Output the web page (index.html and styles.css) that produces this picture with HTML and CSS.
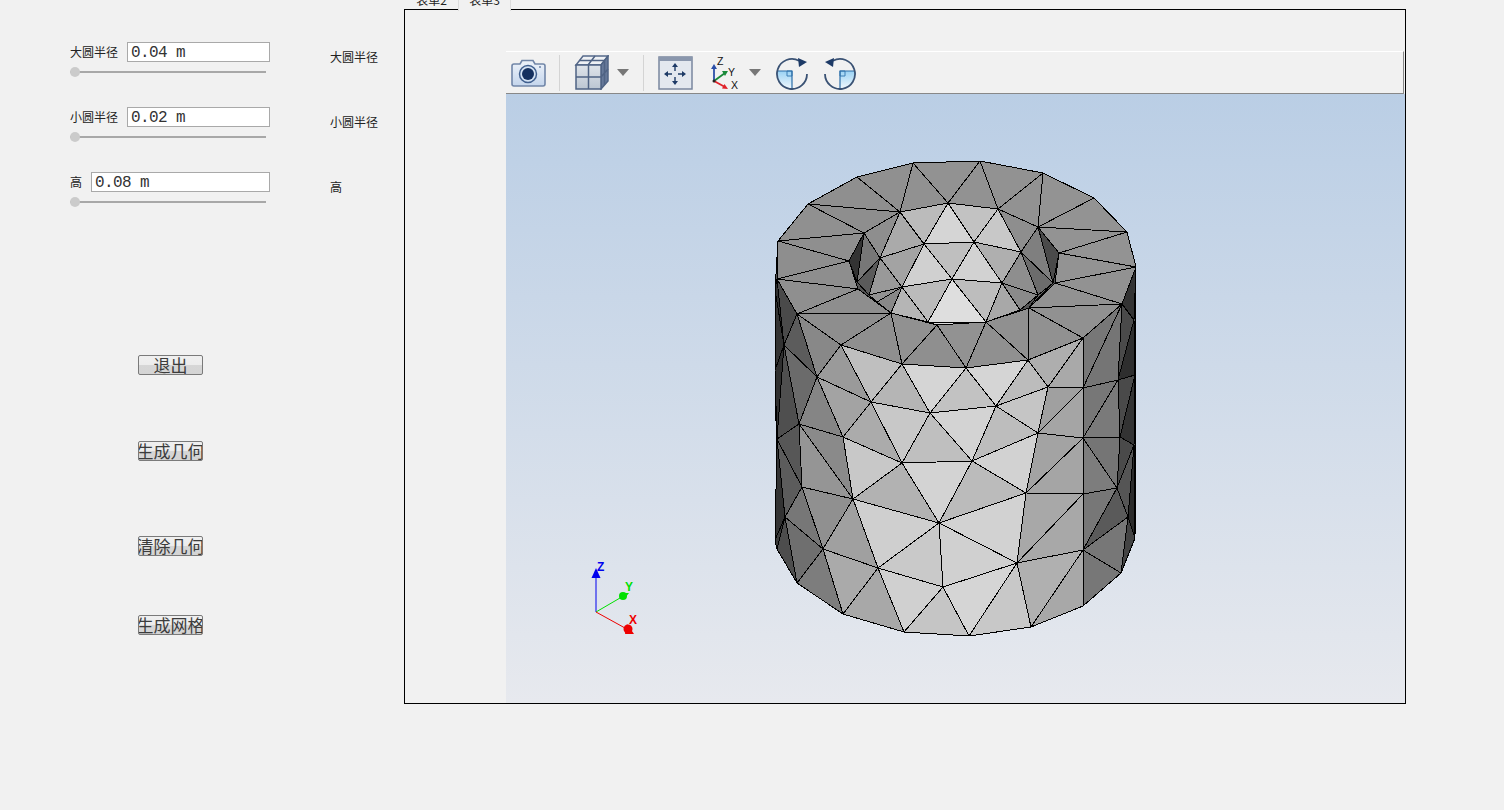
FILE: index.html
```html
<!DOCTYPE html>
<html lang="zh">
<head>
<meta charset="utf-8">
<title>几何网格</title>
<link rel="stylesheet" href="styles.css">
</head>
<body>
<div class="app">
  <section class="controls">
    <div class="field">
      <div class="field-row"><span class="label">大圆半径</span><div class="entry">0.04 m</div></div>
      <div class="slider"><div class="track"></div><div class="knob"></div></div>
    </div>
    <div class="field">
      <div class="field-row"><span class="label">小圆半径</span><div class="entry">0.02 m</div></div>
      <div class="slider"><div class="track"></div><div class="knob"></div></div>
    </div>
    <div class="field">
      <div class="field-row"><span class="label">高</span><div class="entry">0.08 m</div></div>
      <div class="slider"><div class="track"></div><div class="knob"></div></div>
    </div>
    <div class="actions">
      <button class="btn btn-exit">退出</button>
      <button class="btn btn-geo">生成几何</button>
      <button class="btn btn-clear">清除几何</button>
      <button class="btn btn-mesh">生成网格</button>
    </div>
  </section>
  <section class="readouts">
    <div class="readout">大圆半径</div>
    <div class="readout">小圆半径</div>
    <div class="readout">高</div>
  </section>
  <section class="frame">
    <div class="tabs">
      <div class="tab">表单2</div>
      <div class="tab tab-active">表单3</div>
    </div>
    <div class="viewer">
      <div class="toolbar">
        <svg class="ic ic-camera" viewBox="0 0 36 30">
          <defs><linearGradient id="cam" x1="0" y1="0" x2="0" y2="1"><stop offset="0" stop-color="#eef3fa"/><stop offset="1" stop-color="#c4d5ec"/></linearGradient></defs>
          <path d="M3 6h6l2-3.500h11l2 3.500h8a2 2 0 0 1 2 2v18a2 2 0 0 1-2 2h-29a2 2 0 0 1-2-2v-18a2 2 0 0 1 2-2z" fill="url(#cam)" stroke="#7186a8" stroke-width="1.600"/>
          <circle cx="17" cy="16" r="8.500" fill="#d4e2f3" stroke="#41608f" stroke-width="1.500"/>
          <circle cx="17" cy="16" r="6" fill="#15305f"/>
          <circle cx="29" cy="9" r="1" fill="#6d84a8"/>
        </svg>
        <div class="sep sep-a"></div>
        <svg class="ic ic-cube" viewBox="0 0 35 35">
          <defs><linearGradient id="cubef" x1="0" y1="0" x2="0" y2="1"><stop offset="0" stop-color="#dfe4ea"/><stop offset="1" stop-color="#bcc6d2"/></linearGradient></defs>
          <path d="M9 1h25l-7 9h-25z" fill="#eef1f5" stroke="#56698a" stroke-width="1.500"/>
          <path d="M27 10l7-9v25l-7 8z" fill="#66799a" stroke="#4f6384" stroke-width="1.500"/>
          <path d="M2 10h25v24h-25z" fill="url(#cubef)" stroke="#4f6384" stroke-width="1.500"/>
          <path d="M14.500 10v24M2 22h25M21 1l-7 9M5.500 5.500h25M30.500 5.500v24.500M27 22l7-8" fill="none" stroke="#4f6384" stroke-width="1.500"/>
        </svg>
        <div class="caret caret-a"></div>
        <div class="sep sep-b"></div>
        <svg class="ic ic-fit" viewBox="0 0 35 34">
          <rect x="1" y="1" width="33" height="32" fill="#e3e8ef" stroke="#7a879f" stroke-width="1.500"/>
          <rect x="1" y="1" width="33" height="4" fill="#8a97ad"/>
          <path d="M17 11v4M17 21v4M10 18h4M20 18h4" stroke="#1d3a66" stroke-width="1.400" fill="none"/>
          <path d="M17 7l-3 4h6zM17 29l-3-4h6zM6 18l4-3v6zM28 18l-4-3v6z" fill="#1d3a66"/>
        </svg>
        <svg class="ic ic-axes" viewBox="0 0 30 34">
          <path d="M4 25v-14" stroke="#2c4fa8" stroke-width="1.800" fill="none"/>
          <path d="M4 8l-3 5h6z" fill="#2c4fa8"/>
          <path d="M4 25l11-8" stroke="#1a8a3a" stroke-width="1.800" fill="none"/>
          <path d="M18 15l-6 0 3 5z" fill="#1a8a3a"/>
          <path d="M4 25l11 6" stroke="#e0222a" stroke-width="1.800" fill="none"/>
          <path d="M18 33l-6-0.500 2.500-4.500z" fill="#e0222a"/>
          <circle cx="4" cy="25" r="1.500" fill="#222"/>
          <text x="7" y="9" class="ax-label">Z</text>
          <text x="18" y="20" class="ax-label">Y</text>
          <text x="21" y="33" class="ax-label">X</text>
        </svg>
        <div class="caret caret-b"></div>
        <svg class="ic ic-rot" viewBox="0 0 34 34">
          <defs><linearGradient id="rotf" x1="0" y1="0" x2="0" y2="1"><stop offset="0" stop-color="#9ad2f4"/><stop offset="1" stop-color="#f2f8fd"/></linearGradient></defs>
          <path d="M2.300 15H17V33A15 15 0 0 1 2.300 15z" fill="url(#rotf)"/>
          <path d="M12 15h5v5h-5z" fill="none" stroke="#3c7fb5" stroke-width="1"/>
          <path d="M2.300 15H17V33" fill="none" stroke="#2c6ea8" stroke-width="1.200"/>
          <path d="M32 18A15 15 0 1 1 24 4.700" fill="none" stroke="#3a5274" stroke-width="1.800"/>
          <path d="M23 2l9 4-8 5z" fill="#1d3a66"/>
        </svg>
        <svg class="ic ic-rot ic-flip" viewBox="0 0 34 34">
          <path d="M2.300 15H17V33A15 15 0 0 1 2.300 15z" fill="url(#rotf)"/>
          <path d="M12 15h5v5h-5z" fill="none" stroke="#3c7fb5" stroke-width="1"/>
          <path d="M2.300 15H17V33" fill="none" stroke="#2c6ea8" stroke-width="1.200"/>
          <path d="M32 18A15 15 0 1 1 24 4.700" fill="none" stroke="#3a5274" stroke-width="1.800"/>
          <path d="M23 2l9 4-8 5z" fill="#1d3a66"/>
        </svg>
      </div>
      <div class="viewport">
        <svg class="scene" viewBox="506 94 899 609">
          <g class="mesh">
            <polygon fill="#555" points="778,241 808,204 857,177 913,163 980,161 1043,173 1094,198 1127,232 1136,267 1135,538 1121,573 1083,606 1031,627 969,636 904,632 843,614 797,583 777,549 775,290"/>
            <polygon fill="#333333" points="849,261 864,233 857,282"/>
            <polygon fill="#777777" points="864,233 880,258 857,282"/>
            <polygon fill="#5a5a5a" points="857,282 880,258 869,295"/>
            <polygon fill="#999999" points="880,258 902,287 869,295"/>
            <polygon fill="#929292" points="869,295 902,287 877,302"/>
            <polygon fill="#888888" points="902,287 891,313 877,302"/>
            <polygon fill="#8e8e8e" points="864,233 900,212 880,258"/>
            <polygon fill="#aaaaaa" points="900,212 924,244 880,258"/>
            <polygon fill="#bbbbbb" points="900,212 948,203 924,244"/>
            <polygon fill="#d5d5d5" points="948,203 974,242 924,244"/>
            <polygon fill="#c2c2c2" points="948,203 998,209 974,242"/>
            <polygon fill="#c8c8c8" points="998,209 1021,252 974,242"/>
            <polygon fill="#8e8e8e" points="998,209 1038,227 1021,252"/>
            <polygon fill="#4a4a4a" points="1038,227 1059,253 1053,283"/>
            <polygon fill="#7f7f7f" points="1038,227 1053,283 1021,252"/>
            <polygon fill="#6c6c6c" points="1021,252 1053,283 1038,295"/>
            <polygon fill="#666666" points="1038,295 1053,283 1029,308"/>
            <polygon fill="#a3a3a3" points="880,258 924,244 902,287"/>
            <polygon fill="#d0d0d0" points="924,244 952,279 902,287"/>
            <polygon fill="#bfbfbf" points="924,244 974,242 952,279"/>
            <polygon fill="#d2d2d2" points="974,242 1002,283 952,279"/>
            <polygon fill="#afafaf" points="974,242 1021,252 1002,283"/>
            <polygon fill="#8e8e8e" points="1021,252 1038,295 1002,283"/>
            <polygon fill="#bbbbbb" points="902,287 952,279 928,322"/>
            <polygon fill="#dedede" points="952,279 986,322 928,322"/>
            <polygon fill="#bdbdbd" points="952,279 1002,283 986,322"/>
            <polygon fill="#a8a8a8" points="1002,283 1020,310 986,322"/>
            <polygon fill="#8a8a8a" points="1002,283 1038,295 1020,310"/>
            <polygon fill="#b5b5b5" points="902,287 928,322 891,313"/>
            <polygon fill="#dddddd" points="928,322 986,322 937,325"/>

            <polygon fill="#909090" points="778,241 808,204 864,233"/>
            <polygon fill="#8e8e8e" points="808,204 900,212 864,233"/>
            <polygon fill="#8f8f8f" points="808,204 857,177 900,212"/>
            <polygon fill="#909090" points="857,177 913,163 900,212"/>
            <polygon fill="#919191" points="913,163 948,203 900,212"/>
            <polygon fill="#929292" points="913,163 980,161 948,203"/>
            <polygon fill="#929292" points="980,161 998,209 948,203"/>
            <polygon fill="#929292" points="980,161 1043,173 998,209"/>
            <polygon fill="#929292" points="1043,173 1038,227 998,209"/>
            <polygon fill="#939393" points="1043,173 1094,198 1038,227"/>
            <polygon fill="#939393" points="1094,198 1127,232 1038,227"/>
            <polygon fill="#939393" points="1127,232 1059,253 1038,227"/>
            <polygon fill="#939393" points="1127,232 1136,267 1059,253"/>
            <polygon fill="#939393" points="1136,267 1055,283 1059,253"/>
            <polygon fill="#929292" points="1136,267 1122,304 1055,283"/>
            <polygon fill="#929292" points="1122,304 1029,308 1055,283"/>
            <polygon fill="#919191" points="1122,304 1083,338 1029,308"/>
            <polygon fill="#919191" points="1083,338 1028,360 1029,308"/>
            <polygon fill="#909090" points="1028,360 986,322 1029,308"/>
            <polygon fill="#909090" points="1028,360 966,368 986,322"/>
            <polygon fill="#929292" points="966,368 937,325 986,322"/>
            <polygon fill="#8f8f8f" points="966,368 902,364 937,325"/>
            <polygon fill="#919191" points="902,364 891,313 937,325"/>
            <polygon fill="#8f8f8f" points="902,364 841,345 891,313"/>
            <polygon fill="#8e8e8e" points="841,345 797,314 891,313"/>
            <polygon fill="#8e8e8e" points="797,314 858,289 891,313"/>
            <polygon fill="#8f8f8f" points="797,314 777,279 858,289"/>
            <polygon fill="#8e8e8e" points="777,279 849,261 858,289"/>
            <polygon fill="#8e8e8e" points="777,279 778,241 849,261"/>
            <polygon fill="#8f8f8f" points="778,241 864,233 849,261"/>

            <polygon fill="#4a4a4a" points="777,279 797,314 784,345"/>
            <polygon fill="#2e2e2e" points="777,279 784,345 775,290"/>
            <polygon fill="#333333" points="775,290 784,345 775,370"/>
            <polygon fill="#4f4f4f" points="784,345 799,424 777,439"/>
            <polygon fill="#2f2f2f" points="775,370 784,345 777,439"/>
            <polygon fill="#575757" points="777,439 799,424 802,487"/>
            <polygon fill="#5c5c5c" points="777,439 802,487 785,517"/>
            <polygon fill="#333333" points="777,439 785,517 775,540"/>
            <polygon fill="#3a3a3a" points="775,540 785,517 777,549"/>
            <polygon fill="#4d4d4d" points="777,549 785,517 797,583"/>
            <polygon fill="#6f6f6f" points="785,517 823,549 797,583"/>
            <polygon fill="#777777" points="785,517 802,487 823,549"/>
            <polygon fill="#5c5c5c" points="797,314 817,377 784,345"/>
            <polygon fill="#6b6b6b" points="784,345 817,377 799,424"/>
            <polygon fill="#888888" points="797,314 841,345 817,377"/>
            <polygon fill="#9a9a9a" points="817,377 841,345 871,402"/>
            <polygon fill="#a3a3a3" points="817,377 871,402 843,437"/>
            <polygon fill="#858585" points="817,377 843,437 799,424"/>
            <polygon fill="#8a8a8a" points="799,424 843,437 853,499"/>
            <polygon fill="#959595" points="799,424 802,487 853,499"/>
            <polygon fill="#909090" points="802,487 853,499 823,549"/>
            <polygon fill="#a0a0a0" points="823,549 853,499 878,568"/>
            <polygon fill="#7d7d7d" points="823,549 797,583 843,614"/>
            <polygon fill="#aaaaaa" points="823,549 878,568 843,614"/>
            <polygon fill="#a8a8a8" points="878,568 904,632 843,614"/>

            <polygon fill="#bfbfbf" points="841,345 902,364 871,402"/>
            <polygon fill="#b5b5b5" points="902,364 930,413 871,402"/>
            <polygon fill="#d5d5d5" points="902,364 966,368 930,413"/>
            <polygon fill="#c2c2c2" points="966,368 996,406 930,413"/>
            <polygon fill="#d5d5d5" points="966,368 1028,360 996,406"/>
            <polygon fill="#bcbcbc" points="1028,360 1048,387 996,406"/>
            <polygon fill="#c5c5c5" points="1048,387 1038,433 996,406"/>
            <polygon fill="#aeaeae" points="1028,360 1083,338 1048,387"/>
            <polygon fill="#a9a9a9" points="1083,338 1083,388 1048,387"/>
            <polygon fill="#a0a0a0" points="1048,387 1083,388 1038,433"/>
            <polygon fill="#a5a5a5" points="1083,388 1083,438 1038,433"/>
            <polygon fill="#a3a3a3" points="1038,433 1083,438 1026,493"/>
            <polygon fill="#a5a5a5" points="1083,438 1083,494 1026,493"/>
            <polygon fill="#a8a8a8" points="1026,493 1083,494 1017,563"/>
            <polygon fill="#a8a8a8" points="1083,494 1083,550 1017,563"/>
            <polygon fill="#c8c8c8" points="843,437 902,463 853,499"/>
            <polygon fill="#ababab" points="871,402 902,463 843,437"/>
            <polygon fill="#c8c8c8" points="871,402 930,413 902,463"/>
            <polygon fill="#bfbfbf" points="930,413 972,461 902,463"/>
            <polygon fill="#d3d3d3" points="930,413 996,406 972,461"/>
            <polygon fill="#bdbdbd" points="996,406 1038,433 972,461"/>
            <polygon fill="#d2d2d2" points="972,461 1038,433 1026,493"/>
            <polygon fill="#b2b2b2" points="853,499 902,463 939,523"/>
            <polygon fill="#d3d3d3" points="902,463 972,461 939,523"/>
            <polygon fill="#bbbbbb" points="972,461 1026,493 939,523"/>
            <polygon fill="#cfcfcf" points="853,499 939,523 878,568"/>
            <polygon fill="#d2d2d2" points="939,523 1026,493 1017,563"/>
            <polygon fill="#d0d0d0" points="939,523 1017,563 943,587"/>
            <polygon fill="#c9c9c9" points="878,568 939,523 943,587"/>
            <polygon fill="#d0d0d0" points="878,568 943,587 904,632"/>
            <polygon fill="#c5c5c5" points="943,587 969,636 904,632"/>
            <polygon fill="#d5d5d5" points="943,587 1017,563 969,636"/>
            <polygon fill="#c8c8c8" points="1017,563 1031,627 969,636"/>
            <polygon fill="#b0b0b0" points="1017,563 1083,550 1031,627"/>
            <polygon fill="#a8a8a8" points="1083,550 1083,606 1031,627"/>
            <polygon fill="#777777" points="1083,550 1121,573 1083,606"/>

            <polygon fill="#777777" points="1083,338 1122,304 1083,388"/>
            <polygon fill="#757575" points="1122,304 1118,380 1083,388"/>
            <polygon fill="#777777" points="1083,388 1118,380 1083,438"/>
            <polygon fill="#7a7a7a" points="1118,380 1120,437 1083,438"/>
            <polygon fill="#333333" points="1122,304 1136,267 1134,320"/>
            <polygon fill="#4a4a4a" points="1122,304 1134,320 1118,380"/>
            <polygon fill="#2e2e2e" points="1134,320 1135,375 1118,380"/>
            <polygon fill="#4a4a4a" points="1118,380 1135,375 1120,437"/>
            <polygon fill="#333333" points="1135,375 1134,445 1120,437"/>
            <polygon fill="#757575" points="1083,438 1120,437 1117,488"/>
            <polygon fill="#7d7d7d" points="1083,438 1117,488 1083,494"/>
            <polygon fill="#4a4a4a" points="1120,437 1134,445 1117,488"/>
            <polygon fill="#555555" points="1134,445 1128,517 1117,488"/>
            <polygon fill="#777777" points="1083,494 1117,488 1083,550"/>
            <polygon fill="#5a5a5a" points="1117,488 1128,517 1083,550"/>
            <polygon fill="#2a2a2a" points="1134,445 1135,538 1128,517"/>
            <polygon fill="#444444" points="1128,517 1135,538 1121,573"/>
            <polygon fill="#777777" points="1083,550 1128,517 1121,573"/>
          </g>
          <g class="triad">
            <path d="M596 612V576" stroke="#0000ee" fill="none"/>
            <path d="M596 568l-4.500 10h9z" fill="#0000ee"/>
            <path d="M596 612L620 598" stroke="#00e000" fill="none"/>
            <circle cx="623" cy="596" r="4" fill="#00e000"/>
            <path d="M620 593h9l-4 5z" fill="#00e000"/>
            <path d="M596 612L625 628" stroke="#ee0000" fill="none"/>
            <circle cx="628" cy="629" r="4.500" fill="#ee0000"/>
            <path d="M627 624l7 10h-9z" fill="#ee0000"/>
            <text x="597" y="571" class="tr-label tr-z">Z</text>
            <text x="625" y="591" class="tr-label tr-y">Y</text>
            <text x="629" y="624" class="tr-label tr-x">X</text>
          </g>
        </svg>
      </div>
    </div>
  </section>
</div>
</body>
</html>
```
FILE: styles.css
```css
* { box-sizing: border-box; }
html, body { margin: 0; padding: 0; }
body {
  width: 1504px;
  height: 810px;
  overflow: hidden;
  background: #f1f1f1;
  font-family: "Noto Sans CJK SC", "Liberation Sans", sans-serif;
}
.app {
  display: flex;
  align-items: flex-start;
  height: 810px;
  background: #f1f1f1;
}
.controls {
  width: 330px;
  padding: 42px 0 0 70px;
}
.field {
  width: 200px;
  height: 65px;
}
.field-row {
  display: flex;
  align-items: center;
  gap: 9px;
  height: 20px;
}
.label {
  font-size: 12px;
  line-height: 20px;
  color: #222;
  white-space: nowrap;
}
.entry {
  flex: 1;
  height: 20px;
  padding-left: 3px;
  background: #fff;
  border: 1px solid #a9a9a9;
  font-family: "Liberation Mono", monospace;
  font-size: 16px;
  letter-spacing: -0.6px;
  line-height: 21px;
  color: #333;
  overflow: hidden;
}
.slider {
  position: relative;
  width: 196px;
  height: 10px;
  margin-top: 5px;
}
.track {
  position: absolute;
  top: 4px;
  left: 0;
  right: 0;
  height: 2px;
  background: #a8a8a8;
}
.knob {
  position: absolute;
  left: 0;
  top: 0;
  width: 10px;
  height: 10px;
  border-radius: 50%;
  background: #cbcbcb;
}
.actions {
  display: flex;
  flex-direction: column;
  padding-left: 68px;
}
.btn {
  display: flex;
  align-items: center;
  justify-content: center;
  width: 65px;
  height: 20px;
  padding: 0;
  overflow: hidden;
  border: 1px solid #7a7a7a;
  border-radius: 2px;
  background: linear-gradient(#f0f0f0 0, #ececec 48%, #d6d6d6 50%, #d4d4d4 100%);
  font-family: "Noto Sans CJK SC", sans-serif;
  font-size: 17px;
  line-height: 18px;
  color: #3c3c3c;
  white-space: nowrap;
}
.btn-exit { margin-top: 118px; }
.btn-geo { margin-top: 66px; }
.btn-clear { margin-top: 75px; }
.btn-mesh { margin-top: 59px; }
.readouts {
  width: 74px;
  padding-top: 47px;
}
.readout {
  height: 65px;
  font-size: 12px;
  line-height: 20px;
  color: #222;
}
.frame {
  position: relative;
  width: 1002px;
  height: 695px;
  margin-top: 9px;
  padding: 41px 0 0 101px;
  border: 1px solid #000;
  background: #f1f1f1;
}
.tabs {
  position: absolute;
  top: -20px;
  left: 0;
  display: flex;
  height: 20px;
}
.tab {
  width: 53px;
  height: 20px;
  font-size: 12px;
  line-height: 20px;
  text-align: center;
  color: #222;
}
.tab-active {
  height: 21px;
  background: #f1f1f1;
  border-left: 1px solid #dcdcdc;
  border-right: 1px solid #dcdcdc;
}
.viewer {
  display: flex;
  flex-direction: column;
  width: 899px;
  height: 652px;
}
.toolbar {
  display: flex;
  align-items: center;
  flex: none;
  height: 43px;
  margin-right: 1px;
  padding-left: 5px;
  background: #f1f1f1;
  border-top: 1px solid #fff;
  border-right: 1px solid #888;
  border-bottom: 1px solid #888;
}
.ic { display: block; flex: none; }
.ic-camera { width: 36px; height: 30px; }
.ic-cube { width: 35px; height: 35px; margin-left: 14px; }
.ic-fit { width: 35px; height: 34px; margin-left: 14px; }
.ic-axes { width: 30px; height: 34px; margin-left: 17px; }
.ic-rot { width: 34px; height: 34px; margin-left: 14px; }
.ic-flip { transform: scaleX(-1); }
.ax-label {
  font-family: "Liberation Sans", sans-serif;
  font-size: 10.500px;
  fill: #111;
}
.sep {
  flex: none;
  width: 1px;
  height: 36px;
  background: #d4d4d4;
}
.sep-a { margin-left: 12px; }
.sep-b { margin-left: 14px; }
.caret {
  flex: none;
  width: 0;
  height: 0;
  margin-left: 8px;
  border-left: 6px solid transparent;
  border-right: 6px solid transparent;
  border-top: 7px solid #777;
}
.caret-b { margin-left: 9px; }
.viewport {
  flex: 1;
  background: linear-gradient(#bacee5, #e7e9ee);
}
.scene {
  display: block;
  width: 899px;
  height: 609px;
}
.mesh polygon {
  stroke: #000;
  stroke-width: 1;
  stroke-linejoin: round;
  shape-rendering: crispEdges;
}
.tr-label {
  font-family: "Liberation Sans", sans-serif;
  font-size: 12px;
  font-weight: 700;
}
.tr-z { fill: #0000ee; }
.tr-y { fill: #00e000; }
.tr-x { fill: #ee0000; }
```
